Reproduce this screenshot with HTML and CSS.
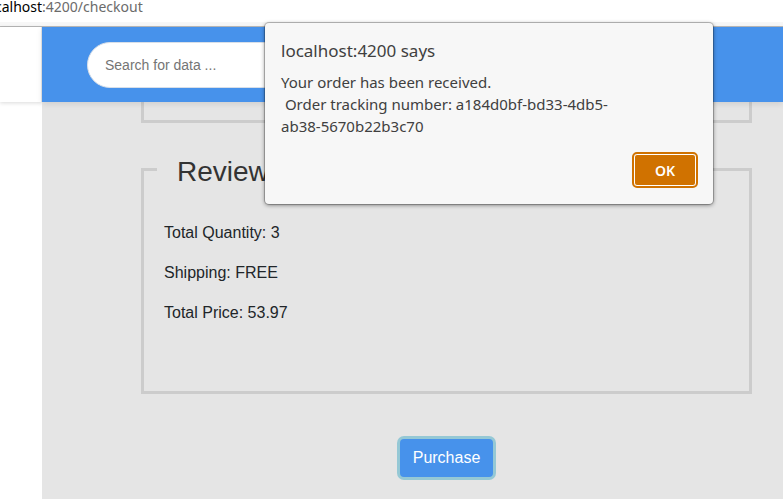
FILE: index.html
```html
<!DOCTYPE html>
<html lang="en">
<head>
<meta charset="utf-8">
<title>Checkout</title>
<link rel="stylesheet" href="styles.css">
</head>
<body>
<div class="address-bar"><span class="host">calhost</span>:4200/checkout</div>
<div class="toolbar-edge"></div>
<div class="app">
  <aside class="sidebar"><div class="sidebar-head"></div></aside>
  <div class="page">
    <header class="header">
      <input class="search" type="text" placeholder="Search for data ..." aria-label="Search for data">
    </header>
    <main class="content">
      <form class="checkout">
        <div class="group group-end"></div>
        <fieldset class="group review">
          <legend>Review</legend>
          <p>Total Quantity: 3</p>
          <p>Shipping: FREE</p>
          <p>Total Price: 53.97</p>
        </fieldset>
        <button class="purchase" type="button">Purchase</button>
      </form>
    </main>
  </div>
</div>
<div class="dialog" role="alertdialog" aria-labelledby="dialog-title" aria-describedby="dialog-text">
  <h1 class="dialog-title" id="dialog-title">localhost:4200 says</h1>
  <p class="dialog-text" id="dialog-text">Your order has been received.
 Order tracking number: a184d0bf-bd33-4db5-ab38-5670b22b3c70</p>
  <button class="ok" type="button">OK</button>
</div>
</body>
</html>
```

FILE: styles.css
```css
* {
  box-sizing: border-box;
}

body {
  margin: 0;
  min-height: 100vh;
  display: flex;
  flex-direction: column;
  position: relative;
  overflow: hidden;
  background: #fff;
  color: #212529;
  font: 16px/24px "Liberation Sans", Arial, sans-serif;
}

.address-bar {
  height: 22px;
  margin-left: -5px;
  color: #6b6b6b;
  font: 14px/14px "Noto Sans", sans-serif;
  white-space: nowrap;
}

.host {
  color: #000;
}

.toolbar-edge {
  height: 5px;
  background: #f7f7f7;
  border-bottom: 1px solid #b8b8b8;
}

.app {
  flex: 1;
  display: flex;
}

.sidebar {
  width: 42px;
  background: #fff;
}

.sidebar-head {
  height: 75px;
  border-right: 1px solid #e5e5e5;
  box-shadow: 0 1px 4px rgba(0, 0, 0, 0.15);
}

.page {
  flex: 1;
  display: flex;
  flex-direction: column;
  position: relative;
  background: #e5e5e5;
}

.header {
  height: 75px;
  padding: 15px 45px;
  position: relative;
  background: #4792eb;
  box-shadow: 0 2px 6px rgba(0, 0, 0, 0.1);
}

.search {
  width: 400px;
  height: 46px;
  padding: 0 17px;
  border: 1px solid #d8dfe8;
  border-radius: 23px;
  background: #fff;
  font: 14px "Liberation Sans", Arial, sans-serif;
}

.search::placeholder {
  color: #757575;
}

.checkout {
  padding: 0 31px 19px 99px;
  display: flex;
  flex-direction: column;
}

.group {
  margin: 0;
  min-width: 0;
  border: 3px solid #ccc;
}

.group-end {
  height: 21px;
  border-top: 0;
}

.review {
  margin-top: 23px;
  padding: 28px 20px 50px 13px;
}

.review legend {
  padding: 5px 20px 0;
  color: #333;
  font-size: 28px;
  line-height: 42px;
}

.review p {
  margin: 0 0 16px 7px;
}

.purchase {
  align-self: center;
  margin-top: 45px;
  padding: 7px 13px;
  border: 0;
  border-radius: 4px;
  background: #4792eb;
  box-shadow: 0 0 0 3px #95c8d5;
  color: #fff;
  font: 16px/24px "Liberation Sans", Arial, sans-serif;
}

.dialog {
  position: absolute;
  top: 23px;
  left: 265px;
  width: 448px;
  padding: 16px 17px 18px 16px;
  display: flex;
  flex-direction: column;
  border-radius: 4px;
  background: #f7f7f7;
  box-shadow: 0 0 0 1px rgba(0, 0, 0, 0.2), 0 1px 4px rgba(0, 0, 0, 0.5);
  color: #404040;
  font-family: "Noto Sans", sans-serif;
}

.dialog-title {
  margin: 0 0 8px;
  font-size: 17px;
  line-height: 24px;
  font-weight: 400;
}

.dialog-text {
  width: 350px;
  margin: 0 0 17px;
  font-size: 15px;
  line-height: 22px;
  white-space: pre-wrap;
}

.ok {
  align-self: flex-end;
  width: 62px;
  height: 32px;
  padding: 0;
  border: 1px solid #fff;
  border-radius: 3px;
  outline: 2px solid #d07200;
  background: #d07200;
  color: #fff;
  font: 600 14px "Noto Sans", sans-serif;
}
```
